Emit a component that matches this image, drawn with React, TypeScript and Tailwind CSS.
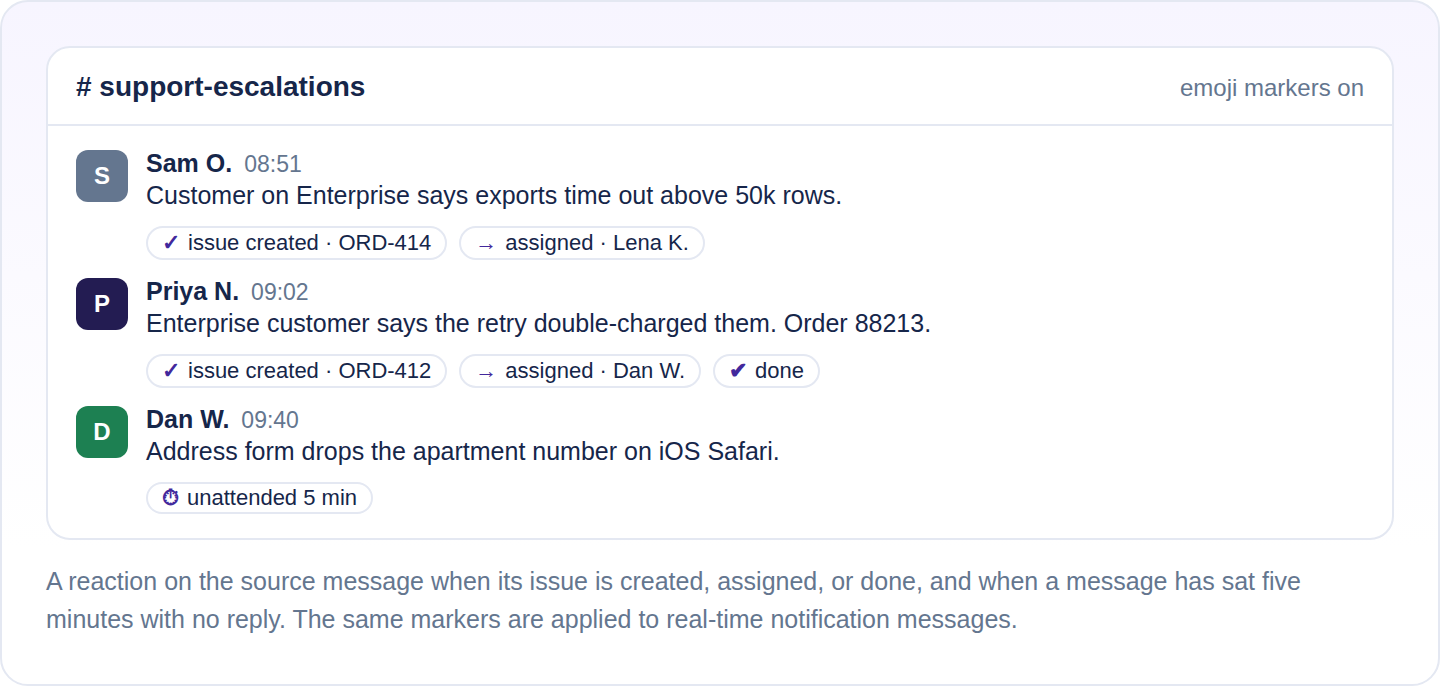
interface Marker {
  glyph: string
  label: string
}

interface Message {
  author: string
  time: string
  text: string
  avatar: string
  markers: Marker[]
}

const messages: Message[] = [
  {
    author: 'Sam O.',
    time: '08:51',
    text: 'Customer on Enterprise says exports time out above 50k rows.',
    avatar: 'bg-[#64768f]',
    markers: [
      { glyph: '✓', label: 'issue created · ORD-414' },
      { glyph: '→', label: 'assigned · Lena K.' },
    ],
  },
  {
    author: 'Priya N.',
    time: '09:02',
    text: 'Enterprise customer says the retry double-charged them. Order 88213.',
    avatar: 'bg-[#231c52]',
    markers: [
      { glyph: '✓', label: 'issue created · ORD-412' },
      { glyph: '→', label: 'assigned · Dan W.' },
      { glyph: '✔', label: 'done' },
    ],
  },
  {
    author: 'Dan W.',
    time: '09:40',
    text: 'Address form drops the apartment number on iOS Safari.',
    avatar: 'bg-[#1d8052]',
    markers: [{ glyph: '⏱', label: 'unattended 5 min' }],
  },
]

function MarkerPill({ glyph, label }: Marker) {
  return (
    <span className="inline-flex items-baseline gap-2 rounded-full border-2 border-[#e4e8f2] bg-white px-3.5 py-0.5 text-[22px] leading-[normal] group-last:py-px">
      <span className="font-bold text-[#42289c]">{glyph}</span>
      <span>{label}</span>
    </span>
  )
}

function MessageRow({ author, time, text, avatar, markers }: Message) {
  return (
    <li className="group flex gap-[18px]">
      <div className={`flex size-[52px] shrink-0 items-center justify-center rounded-xl text-2xl font-bold text-white ${avatar}`}>
        {author[0]}
      </div>
      <div className="min-w-0">
        <div className="flex items-baseline gap-3 leading-[26px]">
          <span className="text-[25px] font-bold">{author}</span>
          <time className="text-[23px] text-[#64768f]">{time}</time>
        </div>
        <p className="text-[25px] leading-9">{text}</p>
        <div className="mt-[13px] flex flex-wrap gap-3">
          {markers.map((m) => (
            <MarkerPill key={m.label} {...m} />
          ))}
        </div>
      </div>
    </li>
  )
}

export default function App() {
  return (
    <main className="rounded-[28px] border-2 border-[#e4e8f2] bg-linear-to-b from-[#f7f5ff] to-white to-80% px-11 pt-11 pb-[46px] font-['Liberation_Sans',Arial,sans-serif] text-[#16264a]">
      <section className="rounded-3xl border-2 border-[#e4e8f2] bg-white">
        <header className="flex items-baseline justify-between border-b-2 border-[#e4e8f2] px-7 pt-[23px] pb-[21px] leading-[normal]">
          <h1 className="text-[28px] font-bold"># support-escalations</h1>
          <span className="text-[24px] text-[#64768f]">emoji markers on</span>
        </header>
        <ul className="flex flex-col gap-[18px] px-7 py-6">
          {messages.map((m) => (
            <MessageRow key={m.author} {...m} />
          ))}
        </ul>
      </section>
      <p className="mt-[22px] text-[25px] leading-[38px] text-[#64768f]">
        A reaction on the source message when its issue is created, assigned, or done, and when a message has sat five
        minutes with no reply. The same markers are applied to real-time notification messages.
      </p>
    </main>
  )
}
